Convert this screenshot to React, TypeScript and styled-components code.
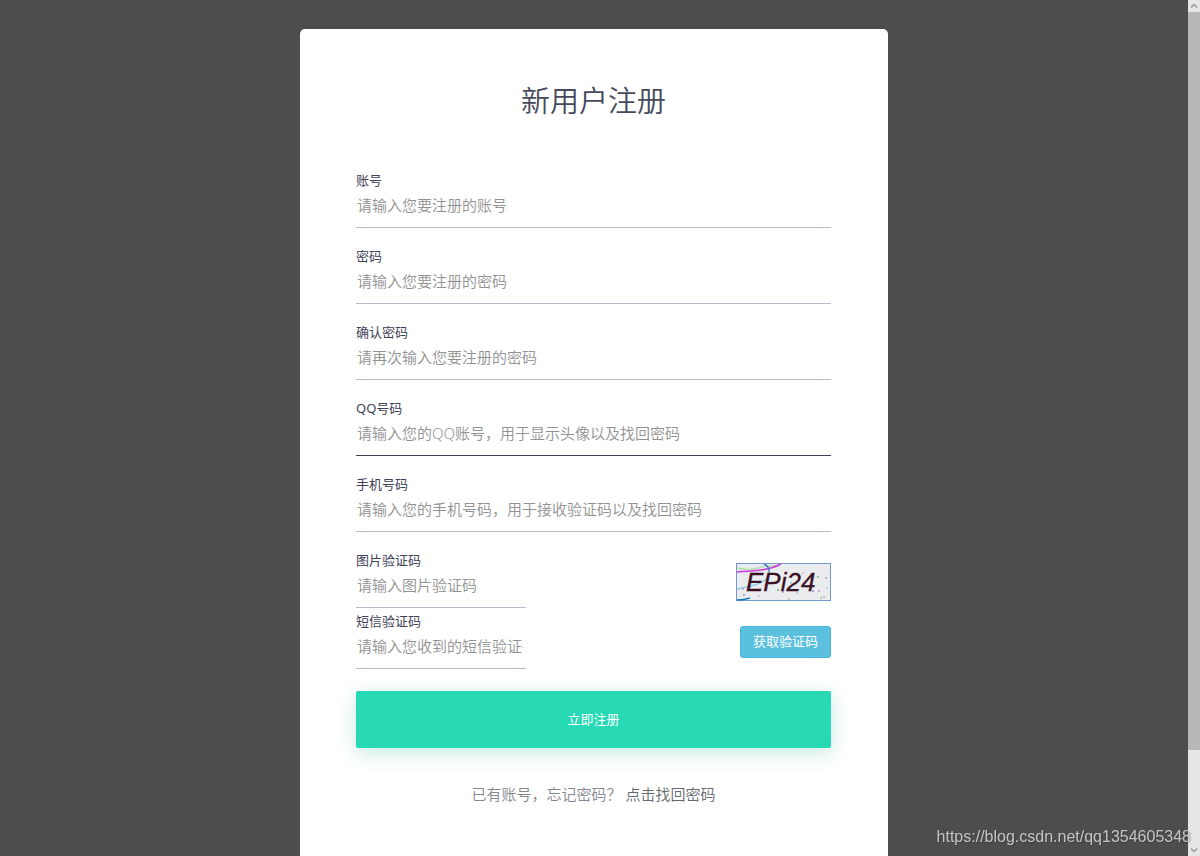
import React from "react";
import styled, { createGlobalStyle } from "styled-components";

const GlobalStyle = createGlobalStyle`
  * { box-sizing: border-box; }
  body {
    margin: 0;
    background: #4d4d4d;
    font-family: "Noto Sans", "Noto Sans CJK SC", sans-serif;
    color: #3f4257;
  }
`;

const Window = styled.div`
  position: relative;
  display: flex;
  height: 100vh;
  overflow: hidden;
`;

const Page = styled.main`
  flex: 1;
  min-width: 0;
  overflow-y: auto;
  scrollbar-width: none;
  padding-top: 29px;
  background: #4d4d4d;
`;

const Card = styled.form`
  width: 100%;
  max-width: 588px;
  min-height: 100%;
  margin: 0 auto;
  padding: 52px 57px 60px 56px;
  border-radius: 5px 5px 0 0;
  background: #fff;
`;

const Title = styled.h1`
  margin: 0 0 49px;
  font-size: 29px;
  line-height: 40px;
  font-weight: 350;
  text-align: center;
  color: #464a5c;
`;

const Fields = styled.div`
  display: flex;
  flex-direction: column;
  gap: 18px;
`;

const CodeRows = styled.div`
  display: flex;
  flex-direction: column;
  gap: 3px;
`;

const CodeRow = styled.div`
  display: flex;
  justify-content: space-between;
  align-items: flex-end;
`;

const FieldBox = styled.div<{ $short?: boolean }>`
  display: flex;
  flex-direction: column;
  width: ${(p) => (p.$short ? "170px" : "100%")};
`;

const Label = styled.label`
  font-size: 13px;
  line-height: 20px;
`;

const Input = styled.input<{ $active?: boolean }>`
  width: 100%;
  height: 38px;
  padding: 0 3px 8px 1px;
  border: 0;
  border-bottom: 1px solid ${(p) => (p.$active ? "#3f4257" : "#b9bacb")};
  border-radius: 0;
  outline: 0;
  background: transparent;
  font: inherit;
  font-weight: 350;
  font-size: 15px;
  color: #3f4257;

  &::placeholder {
    color: #929292;
    opacity: 1;
  }
  &:focus {
    border-bottom-color: #3f4257;
  }
`;

const CaptchaButton = styled.button`
  display: block;
  width: 95px;
  height: 38px;
  margin-bottom: 7px;
  padding: 0;
  border: 0;
  background: none;
  cursor: pointer;

  svg { display: block; }
`;

const SmsButton = styled.button`
  height: 32px;
  margin-bottom: 11px;
  padding: 0 12px 4px;
  border: 1px solid #46b8da;
  border-radius: 3px;
  background: #5bc0de;
  color: #fff;
  font: inherit;
  font-size: 13px;
  cursor: pointer;
`;

const SubmitButton = styled.button`
  width: 100%;
  height: 57px;
  margin-top: 22px;
  padding: 0 0 2px;
  border: 0;
  border-radius: 2px;
  background: #27d9b4;
  box-shadow: 0 5px 20px rgba(30, 170, 140, 0.25);
  color: #fff;
  font: inherit;
  font-size: 13px;
  cursor: pointer;
`;

const Footer = styled.p`
  margin: 35px 0 0;
  font-size: 15px;
  line-height: 22px;
  font-weight: 350;
  text-align: center;
  color: #85878f;
`;

const FooterLink = styled.a`
  color: #666870;
  text-decoration: none;
`;

const Scrollbar = styled.div`
  display: flex;
  flex-direction: column;
  width: 12px;
  flex: none;
  background: #e6e6e6;
`;

const ScrollArrow = styled.div`
  display: flex;
  align-items: center;
  justify-content: center;
  height: 12px;
`;

const Track = styled.div`
  flex: 1;
`;

const Thumb = styled.div`
  height: 738px;
  max-height: 89%;
  background: #b8b8b8;
`;

const Watermark = styled.span`
  position: absolute;
  right: 9px;
  bottom: 8px;
  font-family: "Liberation Sans", sans-serif;
  font-size: 16px;
  line-height: 22px;
  color: #c4c4c4;
  text-shadow: 1px 1px 1px rgba(0, 0, 0, 0.2);
  pointer-events: none;
`;

interface FieldProps {
  id: string;
  label: string;
  placeholder: string;
  type?: string;
  short?: boolean;
  active?: boolean;
}

const Field = ({ id, label, placeholder, type = "text", short, active }: FieldProps) => (
  <FieldBox $short={short}>
    <Label htmlFor={id}>{label}</Label>
    <Input id={id} type={type} placeholder={placeholder} $active={active} />
  </FieldBox>
);

const specks: [number, number, string][] = [
  [6, 25, "#b594d8"], [7, 31, "#8890dc"], [22, 32, "#a9c8e8"], [28, 21, "#e7aaba"],
  [35, 18, "#a5d0aa"], [41, 26, "#66ad78"], [46, 28, "#c28bd0"], [54, 19, "#9db6e2"],
  [66, 9, "#e8b6b0"], [66, 19, "#dfb9d0"], [70, 23, "#93cba0"], [76, 27, "#8e81cc"],
  [81, 13, "#73bf77"], [82, 27, "#c08ed0"], [84, 34, "#a4bf88"], [87, 33, "#b79bd8"],
  [89, 14, "#c690c9"], [90, 24, "#a5c9de"], [52, 35, "#d7a2ab"], [60, 29, "#acc3e2"],
];

const Captcha = () => (
  <svg width="95" height="38" viewBox="0 0 95 38" role="img" aria-label="EPi24">
    <rect x="0.5" y="0.5" width="94" height="37" fill="#ebecee" stroke="#7398cb" />
    <g fill="none">
      <path d="M1 5 Q12 8 22 5 T40 3" stroke="#b7dbb0" strokeWidth="1.5" />
      <path d="M1 9 C15 8 32 8 45 1" stroke="#c83be0" strokeWidth="1.5" />
      <path d="M1 26 C16 22 32 22 33 9" stroke="#8bd0e8" strokeWidth="1.5" />
      <path d="M28 1 Q34 4 33 9" stroke="#4a78ca" strokeWidth="1.5" />
      <path d="M1 37 Q8 37 14 35" stroke="#167abd" strokeWidth="1.5" />
    </g>
    {specks.map(([x, y, c]) => (
      <rect key={`${x}-${y}`} x={x} y={y} width="2" height="2" fill={c} opacity="0.7" />
    ))}
    <text
      x="10"
      y="28"
      fontFamily="Liberation Sans, sans-serif"
      fontStyle="italic"
      fontSize="26"
      fill="#3a1022"
      stroke="#3a1022"
      strokeWidth="0.3"
    >
      EPi24
    </text>
  </svg>
);

const Chevron = ({ down }: { down?: boolean }) => (
  <svg width="8" height="6" viewBox="0 0 8 6" fill="none" stroke="#9a9a9a" strokeWidth="1.5">
    <path d={down ? "M1 1.5 L4 4.5 L7 1.5" : "M1 4.5 L4 1.5 L7 4.5"} />
  </svg>
);

export default function App() {
  return (
    <Window lang="zh-CN">
      <GlobalStyle />
      <Page>
        <Card onSubmit={(e: React.FormEvent) => e.preventDefault()}>
          <Title>新用户注册</Title>
          <Fields>
            <Field id="account" label="账号" placeholder="请输入您要注册的账号" />
            <Field id="password" type="password" label="密码" placeholder="请输入您要注册的密码" />
            <Field id="confirm" type="password" label="确认密码" placeholder="请再次输入您要注册的密码" />
            <Field id="qq" label="QQ号码" placeholder="请输入您的QQ账号，用于显示头像以及找回密码" active />
            <Field id="phone" type="tel" label="手机号码" placeholder="请输入您的手机号码，用于接收验证码以及找回密码" />
            <CodeRows>
              <CodeRow>
                <Field id="captcha" label="图片验证码" placeholder="请输入图片验证码" short />
                <CaptchaButton type="button">
                  <Captcha />
                </CaptchaButton>
              </CodeRow>
              <CodeRow>
                <Field id="sms" label="短信验证码" placeholder="请输入您收到的短信验证码" short />
                <SmsButton type="button">获取验证码</SmsButton>
              </CodeRow>
            </CodeRows>
          </Fields>
          <SubmitButton type="submit">立即注册</SubmitButton>
          <Footer>
            已有账号，忘记密码？ <FooterLink href="#recover">点击找回密码</FooterLink>
          </Footer>
        </Card>
      </Page>
      <Scrollbar aria-hidden="true">
        <ScrollArrow><Chevron /></ScrollArrow>
        <Track><Thumb /></Track>
        <ScrollArrow><Chevron down /></ScrollArrow>
      </Scrollbar>
      <Watermark>https://blog.csdn.net/qq1354605348</Watermark>
    </Window>
  );
}
